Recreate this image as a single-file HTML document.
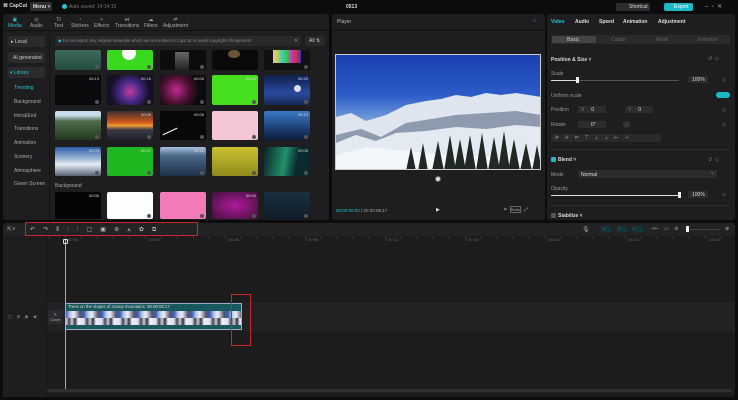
<!DOCTYPE html>
<html><head><meta charset="utf-8"><style>
*{margin:0;padding:0;box-sizing:border-box}
body{width:738px;height:400px;background:#0c0c0d;font-family:"Liberation Sans",sans-serif;color:#ccc;position:relative;overflow:hidden;font-size:5px}
.a{position:absolute}
.panel{position:absolute;background:#1e1e20;border-radius:3px}
.t{position:absolute;white-space:nowrap}
.th{position:absolute;width:46px;border-radius:2px;overflow:hidden}
.dur{position:absolute;right:2px;top:1px;font-size:4px;color:#ddd}
.dl{position:absolute;right:2px;bottom:1px;width:4px;height:4px;border-radius:50%;background:#555}
</style></head><body>
<!-- top bar -->
<div class="t" style="left:3px;top:3px;font-size:5px;color:#ddd;font-weight:bold">⌘ CapCut</div>
<div class="a" style="left:30px;top:2px;width:22px;height:9px;background:#2e2e30;border-radius:2px"></div>
<div class="t" style="left:33px;top:4px;font-size:5px;color:#ddd;font-weight:bold">Menu ˅</div>
<div class="a" style="left:62px;top:4px;width:5px;height:5px;border-radius:50%;background:#22c5d2"></div>
<div class="t" style="left:69px;top:4px;font-size:5px;color:#777">Auto saved: 14:14:15</div>
<div class="t" style="left:346px;top:4px;font-size:5px;color:#ddd;font-weight:bold">0513</div>
<div class="a" style="left:616px;top:3px;width:34px;height:8px;background:#2c2c2e;border-radius:2px"></div>
<div class="t" style="left:629px;top:4px;font-size:5px;color:#ddd">Shortcut</div>
<div class="a" style="left:664px;top:3px;width:29px;height:8px;background:#1cb8c6;border-radius:2px"></div>
<div class="t" style="left:674px;top:4px;font-size:5px;color:#fff">Export</div>
<div class="t" style="left:705px;top:3px;font-size:6px;color:#aaa">–&nbsp;&nbsp;▫&nbsp;&nbsp;✕</div>

<!-- left panel -->
<div class="panel" style="left:3px;top:14px;width:326px;height:206px"></div>
<div class="a" style="left:3px;top:14px;width:326px;height:17px;border-bottom:1px solid #111"></div>
<div class="t" style="left:8px;top:17px;font-size:5px;color:#1fc3d0;text-align:center;line-height:6px">▣<br>Media</div>
<div class="t" style="left:30px;top:17px;font-size:5px;color:#aaa;text-align:center;line-height:6px">◎<br>Audio</div>
<div class="t" style="left:54px;top:17px;font-size:5px;color:#aaa;text-align:center;line-height:6px">TI<br>Text</div>
<div class="t" style="left:71px;top:17px;font-size:5px;color:#aaa;text-align:center;line-height:6px">◔<br>Stickers</div>
<div class="t" style="left:94px;top:17px;font-size:5px;color:#aaa;text-align:center;line-height:6px">✧<br>Effects</div>
<div class="t" style="left:115px;top:17px;font-size:5px;color:#aaa;text-align:center;line-height:6px">⋈<br>Transitions</div>
<div class="t" style="left:144px;top:17px;font-size:5px;color:#aaa;text-align:center;line-height:6px">☁<br>Filters</div>
<div class="t" style="left:163px;top:17px;font-size:5px;color:#aaa;text-align:center;line-height:6px">⇌<br>Adjustment</div>
<div class="a" style="left:49px;top:31px;width:1px;height:189px;background:#151516"></div>
<div class="a" style="left:8px;top:36px;width:37px;height:11px;background:#2b2b2d;border-radius:2px"></div>
<div class="t" style="left:11px;top:39px;color:#ccc">▸ Local</div>
<div class="a" style="left:8px;top:52px;width:37px;height:11px;background:#2b2b2d;border-radius:2px"></div>
<div class="t" style="left:13px;top:55px;color:#ccc">AI generated</div>
<div class="a" style="left:8px;top:67px;width:37px;height:11px;background:#2b2b2d;border-radius:2px"></div>
<div class="t" style="left:10px;top:70px;color:#1fc3d0">▾ Library</div>
<div class="t" style="left:14px;top:85px;color:#1fc3d0">Trending</div>
<div class="t" style="left:14px;top:99px;color:#aaa">Background</div>
<div class="t" style="left:14px;top:113px;color:#aaa">Intro&amp;End</div>
<div class="t" style="left:14px;top:126px;color:#aaa">Transitions</div>
<div class="t" style="left:14px;top:140px;color:#aaa">Animation</div>
<div class="t" style="left:14px;top:154px;color:#aaa">Scenery</div>
<div class="t" style="left:14px;top:168px;color:#aaa">Atmosphere</div>
<div class="t" style="left:14px;top:181px;color:#aaa">Green Screen</div>
<div class="a" style="left:55px;top:36px;width:246px;height:10px;background:#29292b;border-radius:2px"></div>
<div class="t" style="left:58px;top:38px;color:#888;font-size:4.3px"><span style="color:#1fc3d0">◆</span> Do not export any original materials which are not edited on CapCut to avoid copyright infringement</div>
<div class="t" style="left:294px;top:38px;color:#999">✕</div>
<div class="a" style="left:305px;top:36px;width:20px;height:10px;background:#29292b;border-radius:2px"></div>
<div class="t" style="left:309px;top:38px;color:#ccc">All ⇅</div>

<!-- thumbnails -->
<div class="th" style="left:55px;top:50px;height:20px;background:linear-gradient(#3d6b5a,#244a40)"><i class="dl"></i></div>
<div class="th" style="left:107px;top:50px;height:20px;background:#38d91e"><i class="a" style="left:15px;top:-4px;width:14px;height:14px;border-radius:50%;background:#fff"></i><i class="dl"></i></div>
<div class="th" style="left:160px;top:50px;height:20px;background:#0c0c0c"><i class="a" style="left:15px;top:2px;width:14px;height:18px;background:linear-gradient(#666,#222)"></i><i class="dl"></i></div>
<div class="th" style="left:212px;top:50px;height:20px;background:#0a0a0a"><i class="a" style="left:16px;top:0;width:12px;height:8px;border-radius:50%;background:#6b5435"></i></div>
<div class="th" style="left:264px;top:50px;height:20px;background:#111"><i class="a" style="left:9px;top:0;width:28px;height:13px;background:linear-gradient(90deg,#ccc,#cc3,#3cc,#3c3,#c3c,#c33,#33c)"></i><i class="dl"></i></div>

<div class="th" style="left:55px;top:75px;height:30px;background:#0a0a0c"><span class="dur">00:13</span><i class="dl"></i></div>
<div class="th" style="left:107px;top:75px;height:30px;background:radial-gradient(circle at 50% 55%,#c33d9c,#4a2a8a 35%,#140f25 70%)"><span class="dur">00:16</span><i class="dl"></i></div>
<div class="th" style="left:160px;top:75px;height:30px;background:radial-gradient(circle at 35% 50%,#c02a90,#4a1030 40%,#0b0b0b 70%)"><span class="dur">00:06</span><i class="dl"></i></div>
<div class="th" style="left:212px;top:75px;height:30px;background:#46e01e"><span class="dur">00:10</span><i class="dl"></i></div>
<div class="th" style="left:264px;top:75px;height:30px;background:linear-gradient(#0f1f4a,#2b4aa0 60%,#142852)"><i class="a" style="left:30px;top:10px;width:7px;height:7px;border-radius:50%;background:#dde"></i><span class="dur">00:20</span><i class="dl"></i></div>

<div class="th" style="left:55px;top:111px;height:29px;background:linear-gradient(#c9dcec 15%,#4e6a4c 35%,#23381f)"><i class="dl"></i></div>
<div class="th" style="left:107px;top:111px;height:29px;background:linear-gradient(#3a3030,#d45a1c 40%,#f0a030 50%,#3c3a45 65%,#1e2030)"><span class="dur">00:09</span><i class="dl"></i></div>
<div class="th" style="left:160px;top:111px;height:29px;background:#080808"><i class="a" style="left:2px;top:20px;width:16px;height:1px;background:#fff;transform:rotate(-25deg)"></i><span class="dur">00:06</span><i class="dl"></i></div>
<div class="th" style="left:212px;top:111px;height:29px;background:#f5c5d8"><i class="dl"></i></div>
<div class="th" style="left:264px;top:111px;height:29px;background:linear-gradient(#3b7ac8,#1d3e72 60%,#0e1e3a)"><span class="dur">00:13</span><i class="dl"></i></div>

<div class="th" style="left:55px;top:147px;height:29px;background:linear-gradient(#2a5ca8,#9fb8d4 40%,#e6eef4 60%,#556070)"><span class="dur">00:09</span><i class="dl"></i></div>
<div class="th" style="left:107px;top:147px;height:29px;background:#1fb820"><span class="dur">00:57</span><i class="dl"></i></div>
<div class="th" style="left:160px;top:147px;height:29px;background:linear-gradient(#a8c0dc,#4b6888 30%,#1e3048)"><span class="dur">00:11</span><i class="dl"></i></div>
<div class="th" style="left:212px;top:147px;height:29px;background:linear-gradient(#c9c232,#8f8a1c)"><i class="dl"></i></div>
<div class="th" style="left:264px;top:147px;height:29px;background:linear-gradient(100deg,#0b2528,#21906a 45%,#0a2a2e 70%)"><span class="dur">00:06</span><i class="dl"></i></div>
<div class="t" style="left:55px;top:183px;color:#aaa">Background</div>
<div class="th" style="left:55px;top:192px;height:27px;background:#050505"><span class="dur">00:06</span></div>
<div class="th" style="left:107px;top:192px;height:27px;background:#fdfdfd"><i class="dl"></i></div>
<div class="th" style="left:160px;top:192px;height:27px;background:#f27ab7"><i class="dl"></i></div>
<div class="th" style="left:212px;top:192px;height:27px;background:radial-gradient(#b01a9a,#40103a)"><span class="dur">00:40</span><i class="dl"></i></div>
<div class="th" style="left:264px;top:192px;height:27px;background:linear-gradient(#1a3040,#0e1c26)"><i class="dl"></i></div>

<!-- player -->
<div class="panel" style="left:332px;top:14px;width:213px;height:206px"></div>
<div class="a" style="left:332px;top:30px;width:213px;height:1px;background:#111"></div>
<div class="t" style="left:337px;top:19px;color:#bbb">Player</div>
<div class="t" style="left:533px;top:18px;color:#666">≡</div>
<div class="a" style="left:335px;top:54px;width:206px;height:116px;background:linear-gradient(#1a3fb0 0%,#2c5cc8 35%,#6d96d8 55%,#a8c2e6 65%);border:1px solid #ccc;overflow:hidden">
<svg width="206" height="116" style="display:block"><polygon points="0,62 15,58 30,66 50,60 70,50 90,46 105,44 120,40 135,42 150,38 165,40 180,38 206,42 206,116 0,116" fill="#dfe5ee"/><polygon points="0,80 25,74 45,82 70,68 95,64 120,60 150,58 180,56 206,60 206,116 0,116" fill="#8e9aae"/><polygon points="0,88 20,80 40,86 60,78 90,76 120,72 150,74 180,70 206,72 206,116 0,116" fill="#e4eaf2"/><polygon points="0,100 30,92 70,96 110,100 206,104 206,116 0,116" fill="#f4f7fa"/><g fill="#1f2822"><polygon points="140,116 146,78 152,116"/><polygon points="152,116 158,82 164,116"/><polygon points="162,116 168,76 174,116"/><polygon points="172,116 178,84 184,116"/><polygon points="96,116 102,86 108,116"/><polygon points="108,116 114,80 120,116"/><polygon points="118,116 124,84 130,116"/><polygon points="128,116 134,80 140,116"/><polygon points="184,116 190,88 196,116"/><polygon points="196,116 201,90 206,116"/><polygon points="70,116 75,92 80,116"/><polygon points="82,116 87,88 92,116"/></g></svg></div>
<div class="a" style="left:435px;top:176px;width:6px;height:6px;border-radius:50%;background:#ddd;border:1.5px solid #666"></div>
<div class="t" style="left:336px;top:208px;color:#1fc3d0;font-size:4.5px">00:00:00:00 <span style="color:#aaa">| 00:00:06:17</span></div>
<div class="t" style="left:436px;top:207px;color:#ddd">▶</div>
<div class="t" style="left:504px;top:207px;color:#aaa">⌗&nbsp; <span style="border:1px solid #666;font-size:4px">Ratio</span> &nbsp;⤢</div>

<!-- right panel -->
<div class="panel" style="left:547px;top:14px;width:188px;height:206px"></div>
<div class="t" style="left:551px;top:19px;color:#1fc3d0;font-weight:bold">Video</div>
<div class="t" style="left:575px;top:19px;color:#ddd;font-weight:bold">Audio</div>
<div class="t" style="left:599px;top:19px;color:#ddd;font-weight:bold">Speed</div>
<div class="t" style="left:623px;top:19px;color:#ddd;font-weight:bold">Animation</div>
<div class="t" style="left:658px;top:19px;color:#ddd;font-weight:bold">Adjustment</div>
<div class="a" style="left:551px;top:35px;width:179px;height:9px;background:#2a2a2c;border-radius:2px"></div>
<div class="a" style="left:552px;top:36px;width:44px;height:7px;background:#444446;border-radius:2px"></div>
<div class="t" style="left:567px;top:37px;color:#ccc">Basic</div>
<div class="t" style="left:611px;top:37px;color:#666">Cutout</div>
<div class="t" style="left:656px;top:37px;color:#666">Mask</div>
<div class="t" style="left:698px;top:37px;color:#666">Enhance</div>
<div class="t" style="left:551px;top:57px;color:#ddd;font-weight:bold">Position &amp; Size ˅</div>
<div class="t" style="left:708px;top:56px;color:#888">↺&nbsp;&nbsp;◇</div>
<div class="t" style="left:551px;top:71px;color:#999">Scale</div>
<div class="a" style="left:551px;top:80px;width:128px;height:1px;background:#555"></div>
<div class="a" style="left:551px;top:80px;width:26px;height:1px;background:#ddd"></div>
<div class="a" style="left:576px;top:77px;width:3px;height:6px;background:#eee"></div>
<div class="a" style="left:688px;top:76px;width:20px;height:7px;background:#2c2c2e"></div>
<div class="t" style="left:692px;top:77px;color:#ddd">100%</div>
<div class="t" style="left:722px;top:77px;color:#888">◇</div>
<div class="t" style="left:551px;top:93px;color:#999">Uniform scale</div>
<div class="a" style="left:716px;top:92px;width:14px;height:6px;border-radius:3px;background:#1cb8c6"></div>
<div class="t" style="left:551px;top:107px;color:#999">Position</div>
<div class="a" style="left:578px;top:106px;width:28px;height:7px;background:#2c2c2e"></div>
<div class="t" style="left:581px;top:107px;color:#777">X&nbsp;&nbsp;&nbsp;&nbsp;&nbsp;<span style="color:#ddd">0</span></div>
<div class="a" style="left:625px;top:106px;width:28px;height:7px;background:#2c2c2e"></div>
<div class="t" style="left:628px;top:107px;color:#777">Y&nbsp;&nbsp;&nbsp;&nbsp;&nbsp;<span style="color:#ddd">0</span></div>
<div class="t" style="left:722px;top:107px;color:#888">◇</div>
<div class="t" style="left:551px;top:122px;color:#999">Rotate</div>
<div class="a" style="left:578px;top:121px;width:28px;height:7px;background:#2c2c2e"></div>
<div class="t" style="left:591px;top:122px;color:#ddd">0°</div>
<div class="a" style="left:623px;top:121px;width:7px;height:7px;border-radius:50%;background:#333"></div>
<div class="t" style="left:722px;top:122px;color:#888">◇</div>
<div class="a" style="left:551px;top:134px;width:110px;height:8px;background:#2a2a2c"></div>
<div class="t" style="left:555px;top:135px;color:#aaa;letter-spacing:5.5px;font-size:5px">⊫⊪⊨⊤⊥⊥⊢⊣</div>
<div class="a" style="left:551px;top:149px;width:179px;height:1px;background:#2e2e30"></div>
<div class="a" style="left:551px;top:157px;width:5px;height:5px;background:#1cb8c6;border-radius:1px"></div>
<div class="t" style="left:558px;top:157px;color:#ddd;font-weight:bold">Blend ˅</div>
<div class="t" style="left:708px;top:157px;color:#888">↺&nbsp;&nbsp;◇</div>
<div class="t" style="left:551px;top:172px;color:#999">Mode</div>
<div class="a" style="left:578px;top:170px;width:139px;height:8px;background:#2c2c2e"></div>
<div class="t" style="left:581px;top:172px;color:#ddd">Normal</div>
<div class="t" style="left:711px;top:171px;color:#888">˅</div>
<div class="t" style="left:551px;top:186px;color:#999">Opacity</div>
<div class="a" style="left:551px;top:195px;width:128px;height:1px;background:#ddd"></div>
<div class="a" style="left:678px;top:192px;width:3px;height:6px;background:#eee"></div>
<div class="a" style="left:688px;top:191px;width:20px;height:7px;background:#2c2c2e"></div>
<div class="t" style="left:692px;top:192px;color:#ddd">100%</div>
<div class="t" style="left:722px;top:192px;color:#888">◇</div>
<div class="a" style="left:551px;top:205px;width:179px;height:1px;background:#2e2e30"></div>
<div class="a" style="left:551px;top:213px;width:5px;height:5px;background:#555;border-radius:1px"></div>
<div class="t" style="left:558px;top:213px;color:#ddd;font-weight:bold">Stabilize ˅</div>

<!-- timeline -->
<div class="panel" style="left:3px;top:223px;width:732px;height:174px;background:#1c1c1d"></div>
<div class="a" style="left:3px;top:223px;width:732px;height:13px;background:#232325;border-radius:3px 3px 0 0"></div>
<div class="a" style="left:3px;top:236px;width:44px;height:161px;background:#1e1e1f;border-right:1px solid #151515"></div>
<div class="t" style="left:7px;top:226px;color:#aaa;font-size:6px">⇱˅</div>
<div class="t" style="left:30px;top:226px;color:#bbb;font-size:6px;word-spacing:6.5px">↶ ↷ ⫴ ⫶ ⫶ ▢ ▣ ⊛ ⩓ ✿ ⧉</div>
<div class="a" style="left:25px;top:222px;width:173px;height:14px;border:1.5px solid #c8262c"></div>
<div class="t" style="left:582px;top:226px;color:#aaa;font-size:6px">🎙</div>
<div class="a" style="left:601px;top:226px;width:10px;height:6px;background:#133438"></div>
<div class="a" style="left:617px;top:226px;width:10px;height:6px;background:#133438"></div>
<div class="a" style="left:633px;top:226px;width:10px;height:6px;background:#133438"></div>
<div class="t" style="left:602px;top:226px;color:#1fc3d0;font-size:5px;word-spacing:8px">⇔ ⇔ ⇔</div>
<div class="t" style="left:650px;top:226px;color:#aaa;font-size:5px;word-spacing:4px">⊣⊢ ▭ ⊖</div>
<div class="a" style="left:686px;top:226px;width:3px;height:6px;background:#eee"></div>
<div class="a" style="left:690px;top:229px;width:30px;height:1px;background:#444"></div>
<div class="t" style="left:725px;top:226px;color:#aaa;font-size:5px">⊕</div>
<div class="a" style="left:47px;top:236px;width:688px;height:8px;background:repeating-linear-gradient(90deg,#3a3a3c 0 1px,transparent 1px 16px);background-position:18px 0;background-size:16px 3px;background-repeat:repeat-x"></div>
<div class="t" style="left:68px;top:237px;color:#666;font-size:4px">00:00</div>
<div class="t" style="left:148px;top:237px;color:#666;font-size:4px">| 00:03</div>
<div class="t" style="left:227px;top:237px;color:#666;font-size:4px">| 00:06</div>
<div class="t" style="left:306px;top:237px;color:#666;font-size:4px">| 00:09</div>
<div class="t" style="left:386px;top:237px;color:#666;font-size:4px">| 00:12</div>
<div class="t" style="left:466px;top:237px;color:#666;font-size:4px">| 00:15</div>
<div class="t" style="left:547px;top:237px;color:#666;font-size:4px">| 00:18</div>
<div class="t" style="left:627px;top:237px;color:#666;font-size:4px">| 00:21</div>
<div class="t" style="left:708px;top:237px;color:#666;font-size:4px">| 00:24</div>
<div class="a" style="left:47px;top:302px;width:688px;height:29px;background:#222224"></div>
<div class="t" style="left:8px;top:314px;color:#888;font-size:4.5px;word-spacing:3px">▢ ⊕ ◉ ◀</div>
<div class="a" style="left:48px;top:310px;width:15px;height:14px;background:#2c2c2e;border-radius:2px"></div>
<div class="t" style="left:50px;top:312px;color:#aaa;font-size:4px;text-align:center;line-height:5px">✎<br>Cover</div>
<div class="a" style="left:65px;top:303px;width:177px;height:27px;background:#18585c;border:1px solid #9ac"></div>
<div class="t" style="left:68px;top:304px;color:#ddd;font-size:4.3px">Trees on the slopes of snowy mountains&nbsp;&nbsp;00:00:06:17</div>
<div class="a" style="left:66px;top:311px;width:175px;height:14px;background:repeating-linear-gradient(90deg,#3a5ec0 0,#b8c8e0 4px,#eef 8px,#556 14px,#3a5ec0 18px)"></div>
<div class="a" style="left:66px;top:318px;width:175px;height:7px;background:repeating-linear-gradient(90deg,#dde 0,#445 3px,#ccd 6px,#333 9px,#eef 12px,#dde 18px)"></div>
<div class="a" style="left:65px;top:240px;width:1px;height:152px;background:#aaa"></div>
<div class="a" style="left:63px;top:239px;width:5px;height:5px;border:1px solid #ddd;border-radius:1px"></div>
<div class="a" style="left:231px;top:294px;width:20px;height:52px;border:1.5px solid #c8262c"></div>
<div class="a" style="left:47px;top:389px;width:685px;height:3px;background:#303032;border-radius:1px"></div>
</body></html>
